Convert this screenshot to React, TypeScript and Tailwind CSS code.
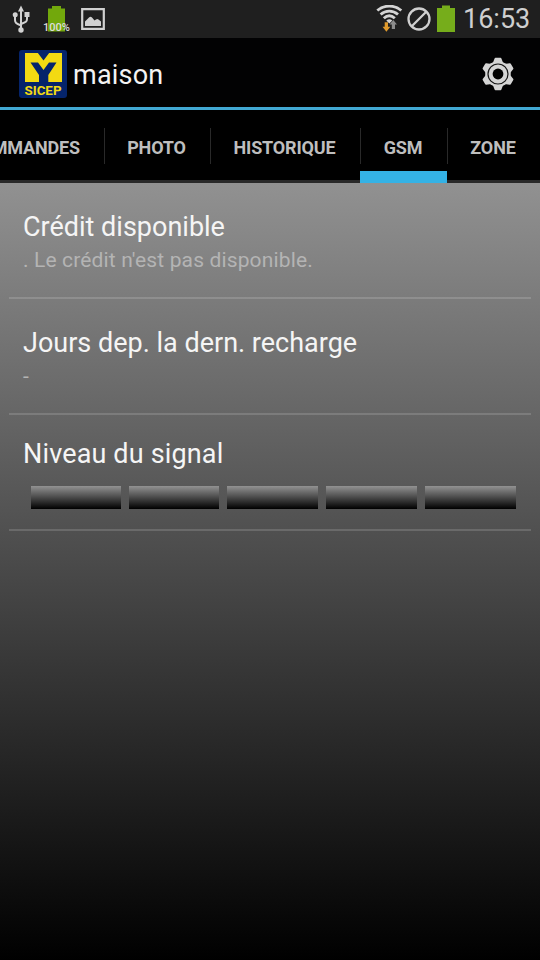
import React from 'react';
import clsx from 'clsx';

const tabs = [
    { key: 'commandes', label: 'COMMANDES', width: 'w-[104px]' },
    { key: 'photo', label: 'PHOTO', width: 'w-[106px]' },
    { key: 'historique', label: 'HISTORIQUE', width: 'w-[150px]' },
    { key: 'gsm', label: 'GSM', width: 'w-[87px]' },
    { key: 'zone', label: 'ZONE', width: 'w-[93px]' },
];

const activeTab = 'gsm';

const signalBars = ['w-[90px]', 'w-[90px]', 'w-[91px]', 'w-[91px]', 'w-[91px]'];

const gearTeeth = [0, 60, 120, 180, 240, 300];

const UsbIcon = () => (
    <svg width="18" height="28" viewBox="0 0 18 28" fill="none" stroke="#d2d2d2" strokeWidth="2">
        <path d="M9 5v19M3 11v4c0 2.500 1 3.500 6 5.500M15 10v4c0 2.500-1 3-6 5" />
        <path d="M9 0.500l3 6H6z" fill="#d2d2d2" stroke="none" />
        <circle cx="3.200" cy="9.800" r="2.500" fill="#d2d2d2" stroke="none" />
        <path d="M12.500 7h5v5h-5z" fill="#d2d2d2" stroke="none" />
        <circle cx="9" cy="25" r="2.700" fill="#d2d2d2" stroke="none" />
    </svg>
);

const BatteryPercentIcon = () => (
    <svg width="28" height="28" viewBox="0 0 28 28">
        <path d="M5 3.500h4V1h9v2.500h4V26.500H5z" fill="#72a80c" />
        <text
            x="13.500"
            y="26"
            textAnchor="middle"
            textLength="27"
            lengthAdjust="spacingAndGlyphs"
            fontSize="10.500"
            fontWeight="500"
            fill="#dedede"
            fontFamily="Roboto, sans-serif"
        >
            100%
        </text>
    </svg>
);

const PictureIcon = () => (
    <svg width="24" height="22" viewBox="0 0 24 22">
        <path d="M1.200 1.200h21.600v19.600H1.200z" fill="none" stroke="#d0d0d0" strokeWidth="2.200" />
        <path d="M4 18v-4.500l4-4c1-1 2-1 3 0l2.500 3 1.500-1c1-0.700 1.500-0.700 2.500 0l2.500 2V18z" fill="#d0d0d0" />
    </svg>
);

const WifiIcon = () => (
    <svg width="28" height="28" viewBox="0 0 28 28" fill="none">
        <g stroke="#d4d4d4" strokeWidth="2.900">
            <path d="M1.300 5.500C8.300 -0.300 18.300 -0.300 25.300 5.500" />
            <path d="M4.600 9.500C9.800 5 16.800 5 22 9.500" />
            <path d="M7.800 13.300C11.300 10 15.300 10 18.800 13.300" />
        </g>
        <path d="M10.300 15.500c2-1.700 4-1.700 6 0L13.300 18.500z" fill="#d4d4d4" />
        <path d="M8.700 17.300h3.300v4.500h2.300L10.400 26.800 6.500 21.800h2.200z" fill="#e09a2c" />
        <path d="M17.300 15l3.700 4.500h-2V24h-3.200v-4.500h-2.200z" fill="#8c8c8c" />
    </svg>
);

const BlockedIcon = () => (
    <svg width="24" height="24" viewBox="0 0 24 24" fill="none" stroke="#cfcfcf" strokeWidth="2.300">
        <circle cx="12" cy="12" r="10.500" />
        <path d="M5 19L19 5" />
    </svg>
);

const BatteryIcon = () => (
    <svg width="18" height="27" viewBox="0 0 18 27">
        <path d="M0 3h5V0.500h8V3h5v24H0z" fill="#76ad1b" />
    </svg>
);

const Logo = () => (
    <svg width="48" height="48" viewBox="0 0 48 48">
        <rect width="48" height="48" rx="3" fill="#05246b" />
        <path d="M6 3h37v29H6z" fill="#f3da12" />
        <path d="M18.500 2.500h12L24.500 10.500z" fill="#05246b" />
        <path d="M11.500 12.500h7.500l5.500 7.500 5.500-7.500h7.500L29.300 25v7.500h-9.300V25z" fill="#05246b" />
        <text
            x="5.500"
            y="45.200"
            textLength="37"
            lengthAdjust="spacingAndGlyphs"
            fontSize="13"
            fontWeight="700"
            fill="#f3da12"
            fontFamily="Roboto, sans-serif"
        >
            SICEP
        </text>
    </svg>
);

const SettingsIcon = () => (
    <svg width="34" height="34" viewBox="0 0 34 34">
        <g fill="#d4d4d4">
            <circle cx="17" cy="17" r="12.800" />
            {gearTeeth.map((angle) => (
                <path
                    key={angle}
                    d="M14.500 0.800h5q0.700 0 0.900 0.700l2.600 6.500h-12l2.600-6.500q0.200-0.700 0.900-0.700z"
                    transform={`rotate(${angle} 17 17)`}
                />
            ))}
        </g>
        <circle cx="17" cy="17" r="10" fill="none" stroke="#151515" strokeWidth="1.200" />
        <circle cx="17" cy="17" r="5.400" fill="#000" />
    </svg>
);

const StatusBar = () => (
    <div className="flex h-[38px] shrink-0 items-center justify-between bg-[#1f1f1f] pl-3 pr-[10px]">
        <div className="flex items-center">
            <UsbIcon />
            <div className="ml-[13px]">
                <BatteryPercentIcon />
            </div>
            <div className="ml-[10px]">
                <PictureIcon />
            </div>
        </div>
        <div className="flex items-center">
            <WifiIcon />
            <div className="ml-[3px] pb-px">
                <BlockedIcon />
            </div>
            <div className="ml-[6px] pb-px">
                <BatteryIcon />
            </div>
            <span className="ml-2 w-[67px] whitespace-nowrap text-[27px] leading-[38px] text-[#cfcfcf]">16:53</span>
        </div>
    </div>
);

const ActionBar = () => (
    <header className="flex h-[72px] shrink-0 items-center border-b-[3px] border-[#42a9d4] bg-[#020203] pl-[19px] pr-[25px] pt-[3px]">
        <Logo />
        <h1 className="ml-[6px] pt-[3px] text-[27px] tracking-[0.2px] text-[#f3f3f3]">maison</h1>
        <button type="button" className="ml-auto">
            <SettingsIcon />
        </button>
    </header>
);

const TabBar = () => (
    <nav className="flex h-[73px] shrink-0 bg-black">
        {tabs.map((tab, index) => (
            <div
                key={tab.key}
                className={clsx(
                    'h-full shrink-0 pt-[18px]',
                    tab.key === activeTab ? 'border-b-[12px] border-[#34b2e5]' : 'border-b-[3px] border-[#292929]',
                    tab.width
                )}
            >
                <div
                    className={clsx(
                        'flex h-9 items-center whitespace-nowrap pt-0.5 text-[18px] font-bold tracking-[-0.15px] text-[#bebebe]',
                        index > 0 ? 'justify-center border-l border-[#292929] pr-[2px]' : 'justify-end pr-6'
                    )}
                >
                    {tab.label}
                </div>
            </div>
        ))}
    </nav>
);

interface RowProps {
    title: string;
    titleClass?: string;
    summary?: string;
    children?: React.ReactNode;
}

const Row: React.FC<RowProps> = ({ title, titleClass, summary, children }) => (
    <section className="mx-[9px] h-[116px] border-b-2 border-white/15 px-[14px]">
        <h2 className={clsx('text-[27px] leading-8 text-[#f5f5f5]', children ? 'pt-[23px]' : 'pt-7', titleClass)}>
            {title}
        </h2>
        {summary && <p className="mt-[3px] text-[21px] leading-7 tracking-[0.14px] text-[#b4b4b4]">{summary}</p>}
        {children}
    </section>
);

const SignalLevel = () => (
    <div className="ml-2 mt-4 flex h-[23px] gap-2">
        {signalBars.map((width, level) => (
            <div key={level} className={clsx('shrink-0 bg-linear-to-b/srgb from-[#929292] to-black', width)} />
        ))}
    </div>
);

const App: React.FC = () => (
    <div className="flex h-[960px] w-[540px] flex-col overflow-hidden bg-black font-[Roboto,sans-serif]">
        <StatusBar />
        <ActionBar />
        <TabBar />
        <main className="grow bg-linear-to-b/srgb from-[#919191] to-black">
            <Row title="Crédit disponible" summary=". Le crédit n'est pas disponible." />
            <Row title="Jours dep. la dern. recharge" summary="-" />
            <Row title="Niveau du signal" titleClass="tracking-[0.15px]">
                <SignalLevel />
            </Row>
        </main>
    </div>
);

export default App;
